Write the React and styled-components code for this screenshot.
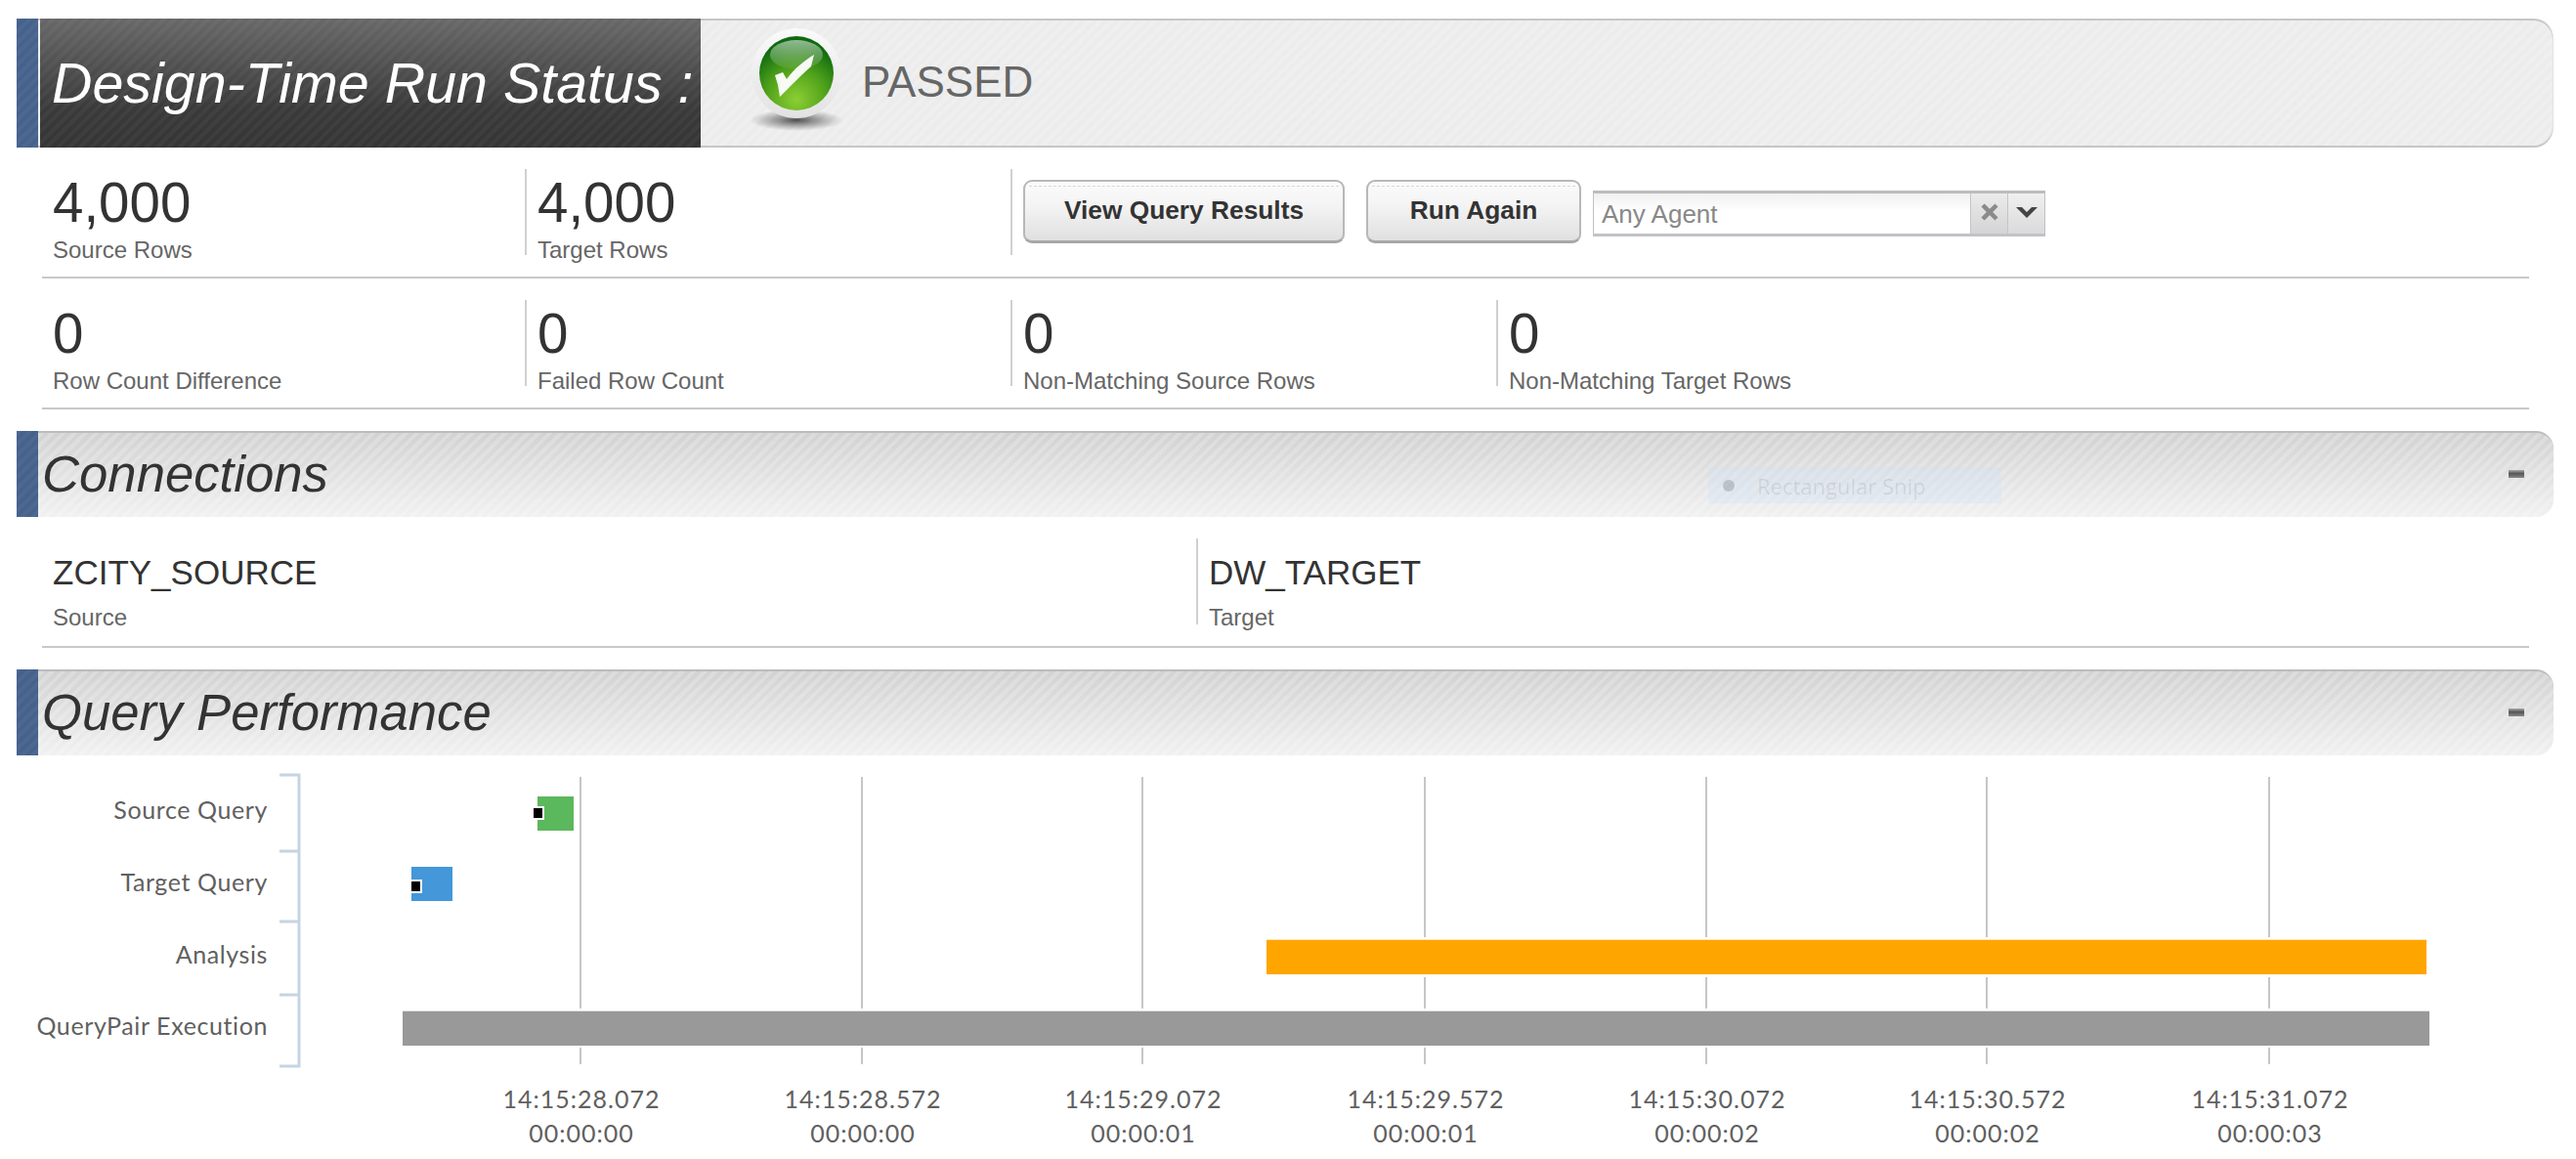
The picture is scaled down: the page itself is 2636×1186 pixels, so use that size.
import React from "react";
import styled, { createGlobalStyle } from "styled-components";

const Global = createGlobalStyle`
  html, body { margin: 0; padding: 0; background: #fff; }
  body { font-family: "Liberation Sans", Arial, sans-serif; overflow: hidden; }
`;

const stripes = (c, w = 4) =>
  `repeating-linear-gradient(135deg, ${c} 0 ${w}px, transparent ${w}px ${w * 2}px)`;

const Page = styled.div`
  width: 2636px;
  height: 1186px;
  box-sizing: border-box;
  padding: 19px 23px 0 17px;
  overflow: hidden;
`;

const Banner = styled.header`
  height: 132px;
  display: flex;
  align-items: stretch;
  box-sizing: border-box;
  border-radius: 0 20px 20px 0;
  border-right: 1px solid #e2e2e2;
  box-shadow: inset 0 2px 0 #c6c6c6, inset 0 -2px 0 #c6c6c6;
  background: ${stripes("rgba(255,255,255,.18)")}, #ececec;
`;

const Strip = styled.div`
  width: 22px;
  flex: none;
  background: ${stripes("rgba(255,255,255,.035)")}, #46628c;
`;

const BannerTitle = styled.h1`
  margin: 0 0 0 2px;
  width: 676px;
  padding-left: 12px;
  box-sizing: border-box;
  flex: none;
  font: italic 400 57.4px/132px "Liberation Sans", Arial, sans-serif;
  color: #fff;
  white-space: nowrap;
  background: ${stripes("rgba(255,255,255,.035)")},
    linear-gradient(#686868, #3a3a3a 70%, #353535);
`;

const StatusIcon = styled.svg`
  width: 120px;
  height: 132px;
  margin-left: 38px;
  flex: none;
`;

const StatusText = styled.span`
  margin-left: 7px;
  font-size: 44px;
  line-height: 130px;
  color: #666;
`;

const Row = styled.section`
  display: flex;
  margin: 0 25px 0 26px;
  padding: 22px 0;
  border-bottom: 2px solid #c8c8c8;
`;

const Cell = styled.div`
  width: ${(p) => p.$w}px;
  flex: none;
  height: 88px;
  box-sizing: border-box;
  padding-left: 11px;
  border-left: ${(p) => (p.$first ? "0" : "2px solid #d0d0d0")};
  ${(p) => p.$actions && "display:flex; padding-top: 11px; align-items:flex-start;"}
`;

const Value = styled.div`
  font-size: 56.5px;
  line-height: 56px;
  margin-top: 7px;
  color: #333;
`;

const Label = styled.div`
  font-size: 24px;
  line-height: 24px;
  margin-top: 8px;
  color: #666;
  white-space: nowrap;
`;

const ConnValue = styled.div`
  font-size: 35px;
  line-height: 35px;
  margin-top: 17px;
  color: #333;
`;

const ConnLabel = styled(Label)`
  margin-top: 17px;
`;

const Button = styled.button`
  position: relative;
  width: ${(p) => p.$w}px;
  height: 65px;
  margin-right: 22px;
  flex: none;
  padding: 0 0 2px;
  box-sizing: border-box;
  border: 2px solid #b8b8b8;
  border-bottom: 3px solid #a8a8a8;
  border-radius: 9px;
  background: linear-gradient(#fbfbfb, #f4f4f4 40%, #e0e0e0);
  font: 700 26.3px "Liberation Sans", Arial, sans-serif;
  color: #333;
  &::before {
    content: "";
    position: absolute;
    left: 4px;
    right: 4px;
    top: 4px;
    border-top: 1px dashed #d8d8d8;
  }
`;

const Select = styled.div`
  display: flex;
  width: 463px;
  height: 47px;
  margin: 11px 0 0 -10px;
  flex: none;
  box-sizing: border-box;
  border: 1px solid #c0c0c0;
  border-top: 3px solid #bcbcbc;
  border-bottom: 3px solid #c2c2c8;
`;

const SelectInput = styled.div`
  flex: 1;
  padding-left: 8px;
  font-size: 26px;
  line-height: 43px;
  color: #888;
  background: linear-gradient(#f0f0f0, #fff 45%);
`;

const SelectButton = styled.div`
  width: 38px;
  flex: none;
  display: flex;
  align-items: center;
  justify-content: center;
  padding-bottom: 4px;
  box-sizing: border-box;
  border-left: 1px solid #c4c4c4;
  background: ${(p) =>
    p.$light ? "linear-gradient(#f0f0f0, #dadada)" : "linear-gradient(#ebebeb, #d4d4d4)"};
`;

const Section = styled.header`
  position: relative;
  height: 88px;
  margin-top: 22px;
  display: flex;
  align-items: stretch;
  border-top: 2px solid #bcbcbc;
  box-sizing: border-box;
  border-radius: 0 18px 18px 0;
  background: ${stripes("rgba(255,255,255,.2)")},
    linear-gradient(#d2d2d2, #f1f1f1);
`;

const SectionStrip = styled(Strip)`
  margin-top: -2px;
`;

const SectionTitle = styled.h2`
  flex: 1;
  margin: -2px 0 0;
  padding-left: 4px;
  font: italic 400 52.7px/88px "Liberation Sans", Arial, sans-serif;
  color: #333;
`;

const Collapse = styled.span`
  align-self: center;
  width: 16px;
  height: 8px;
  margin-right: 30px;
  margin-top: -3px;
  background: linear-gradient(#aaa, #555 45%, #888);
`;

const Ghost = styled.div`
  position: absolute;
  left: 1731px;
  top: 35px;
  width: 300px;
  height: 37px;
  display: flex;
  align-items: center;
  gap: 23px;
  padding-left: 15px;
  box-sizing: border-box;
  background: rgba(205, 225, 250, 0.3);
  font: 400 22px "Open Sans", sans-serif;
  color: rgba(0, 0, 0, 0.09);
  &::before {
    content: "";
    width: 12px;
    height: 12px;
    border-radius: 50%;
    background: rgba(0, 0, 0, 0.16);
  }
`;

const Chart = styled.svg`
  display: block;
  width: 2596px;
  height: 413px;
`;

const CatLabel = styled.text`
  font: 400 25px Lato, "Open Sans", sans-serif;
  fill: #606060;
  text-anchor: end;
  letter-spacing: 0.6px;
`;

const TickLabel = styled.text`
  font: 400 25px Lato, "Open Sans", sans-serif;
  fill: #606060;
  text-anchor: middle;
  letter-spacing: 1px;
`;

const stats = [
  { v: "0", l: "Row Count Difference", w: 494, first: true },
  { v: "0", l: "Failed Row Count", w: 497 },
  { v: "0", l: "Non-Matching Source Rows", w: 497 },
  { v: "0", l: "Non-Matching Target Rows", w: 500 },
];

const grid = [
  [594, "14:15:28.072", "00:00:00"],
  [882, "14:15:28.572", "00:00:00"],
  [1169, "14:15:29.072", "00:00:01"],
  [1458, "14:15:29.572", "00:00:01"],
  [1746, "14:15:30.072", "00:00:02"],
  [2033, "14:15:30.572", "00:00:02"],
  [2322, "14:15:31.072", "00:00:03"],
];

const cats = [
  ["Source Query", 838],
  ["Target Query", 912],
  ["Analysis", 986],
  ["QueryPair Execution", 1059],
];

const marks = [
  { x: 550, y: 815, w: 37, c: "#5cb85c", mx: 546, my: 827 },
  { x: 421, y: 887, w: 42, c: "#4497d8", mx: 421, my: 902 },
];

function PassedIcon() {
  return (
    <StatusIcon viewBox="-60 -56 120 132">
      <defs>
        <radialGradient id="green" cx="50%" cy="85%" r="75%">
          <stop offset="0" stopColor="#8ccf33" />
          <stop offset="0.55" stopColor="#4fa11a" />
          <stop offset="1" stopColor="#0f6a10" />
        </radialGradient>
        <radialGradient id="shade" cx="50%" cy="50%" r="50%">
          <stop offset="0" stopColor="#333" stopOpacity="0.85" />
          <stop offset="1" stopColor="#555" stopOpacity="0" />
        </radialGradient>
        <linearGradient id="ring" x1="0" y1="0" x2="0" y2="1">
          <stop offset="0" stopColor="#fafafa" />
          <stop offset="1" stopColor="#e2e2e2" />
        </linearGradient>
        <linearGradient id="gloss" x1="0" y1="0" x2="0" y2="1">
          <stop offset="0" stopColor="#fff" stopOpacity="0.55" />
          <stop offset="1" stopColor="#fff" stopOpacity="0.05" />
        </linearGradient>
      </defs>
      <ellipse cx="0" cy="48" rx="48" ry="11" fill="url(#shade)" />
      <circle r="46" fill="url(#ring)" />
      <circle r="38" fill="url(#green)" />
      <ellipse cx="0" cy="-19" rx="27" ry="15" fill="url(#gloss)" />
      <path d="M-22 2 L-14 -1 L-10 6 C-2 -5 8 -13 18 -19 L15 -7 C5 2 -3 10 -8 15 L-17 24 L-19 12 Z" fill="#fff" fillOpacity="0.95" />
    </StatusIcon>
  );
}

function Timeline() {
  return (
    <Chart viewBox="17 773 2596 413">
      {grid.map(([x]) => (
        <line key={x} x1={x} x2={x} y1="795" y2="1089" stroke="#c6c6c6" strokeWidth="2" />
      ))}
      <path
        d="M286 793H306V1091H286M286 871H306M286 943H306M286 1018H306"
        fill="none"
        stroke="#c6d4e2"
        strokeWidth="3"
      />
      {cats.map(([t, y]) => (
        <CatLabel key={t} x="274" y={y}>{t}</CatLabel>
      ))}
      <rect x="1296" y="959" width="1187" height="41" fill="#fff" />
      <rect x="412" y="1032" width="2074" height="40" fill="#fff" />
      <rect x="1296" y="961.7" width="1187" height="35.3" fill="#ffa500" />
      <rect x="412" y="1034.7" width="2074" height="35.3" fill="#999" />
      {marks.map((m) => (
        <g key={m.c}>
          <rect x={m.x} y={m.y} width={m.w} height="35" fill={m.c} />
          <rect x={m.mx} y={m.my - 2} width="11" height="14" fill="#fff" />
          <rect x={m.mx} y={m.my} width="9" height="10" fill="#000" />
        </g>
      ))}
      {grid.map(([x, a, b]) => (
        <g key={a}>
          <TickLabel x={x + 1} y="1134">{a}</TickLabel>
          <TickLabel x={x + 1} y="1169">{b}</TickLabel>
        </g>
      ))}
    </Chart>
  );
}

export default function App() {
  return (
    <>
      <Global />
      <Page>
        <Banner>
          <Strip />
          <BannerTitle>Design-Time Run Status :</BannerTitle>
          <PassedIcon />
          <StatusText>PASSED</StatusText>
        </Banner>

        <Row>
          <Cell $w={494} $first>
            <Value>4,000</Value>
            <Label>Source Rows</Label>
          </Cell>
          <Cell $w={497}>
            <Value>4,000</Value>
            <Label>Target Rows</Label>
          </Cell>
          <Cell $w={1100} $actions>
            <Button $w={329}>View Query Results</Button>
            <Button $w={220}>Run Again</Button>
            <Select>
              <SelectInput>Any Agent</SelectInput>
              <SelectButton>
                <svg width="20" height="20" viewBox="0 0 20 20">
                  <path d="M3 3L17 17M17 3L3 17" stroke="#8a8a8a" strokeWidth="4.5" />
                </svg>
              </SelectButton>
              <SelectButton $light>
                <svg width="22" height="14" viewBox="0 0 22 14">
                  <path d="M0 2H6L11 7L16 2H22L11 13Z" fill="#444" />
                </svg>
              </SelectButton>
            </Select>
          </Cell>
        </Row>

        <Row>
          {stats.map((s) => (
            <Cell key={s.l} $w={s.w} $first={s.first}>
              <Value>{s.v}</Value>
              <Label>{s.l}</Label>
            </Cell>
          ))}
        </Row>

        <Section>
          <SectionStrip />
          <SectionTitle>Connections</SectionTitle>
          <Ghost>Rectangular Snip</Ghost>
          <Collapse />
        </Section>

        <Row>
          <Cell $w={1181} $first>
            <ConnValue>ZCITY_SOURCE</ConnValue>
            <ConnLabel>Source</ConnLabel>
          </Cell>
          <Cell $w={800}>
            <ConnValue>DW_TARGET</ConnValue>
            <ConnLabel>Target</ConnLabel>
          </Cell>
        </Row>

        <Section>
          <SectionStrip />
          <SectionTitle>Query Performance</SectionTitle>
          <Collapse />
        </Section>

        <Timeline />
      </Page>
    </>
  );
}
